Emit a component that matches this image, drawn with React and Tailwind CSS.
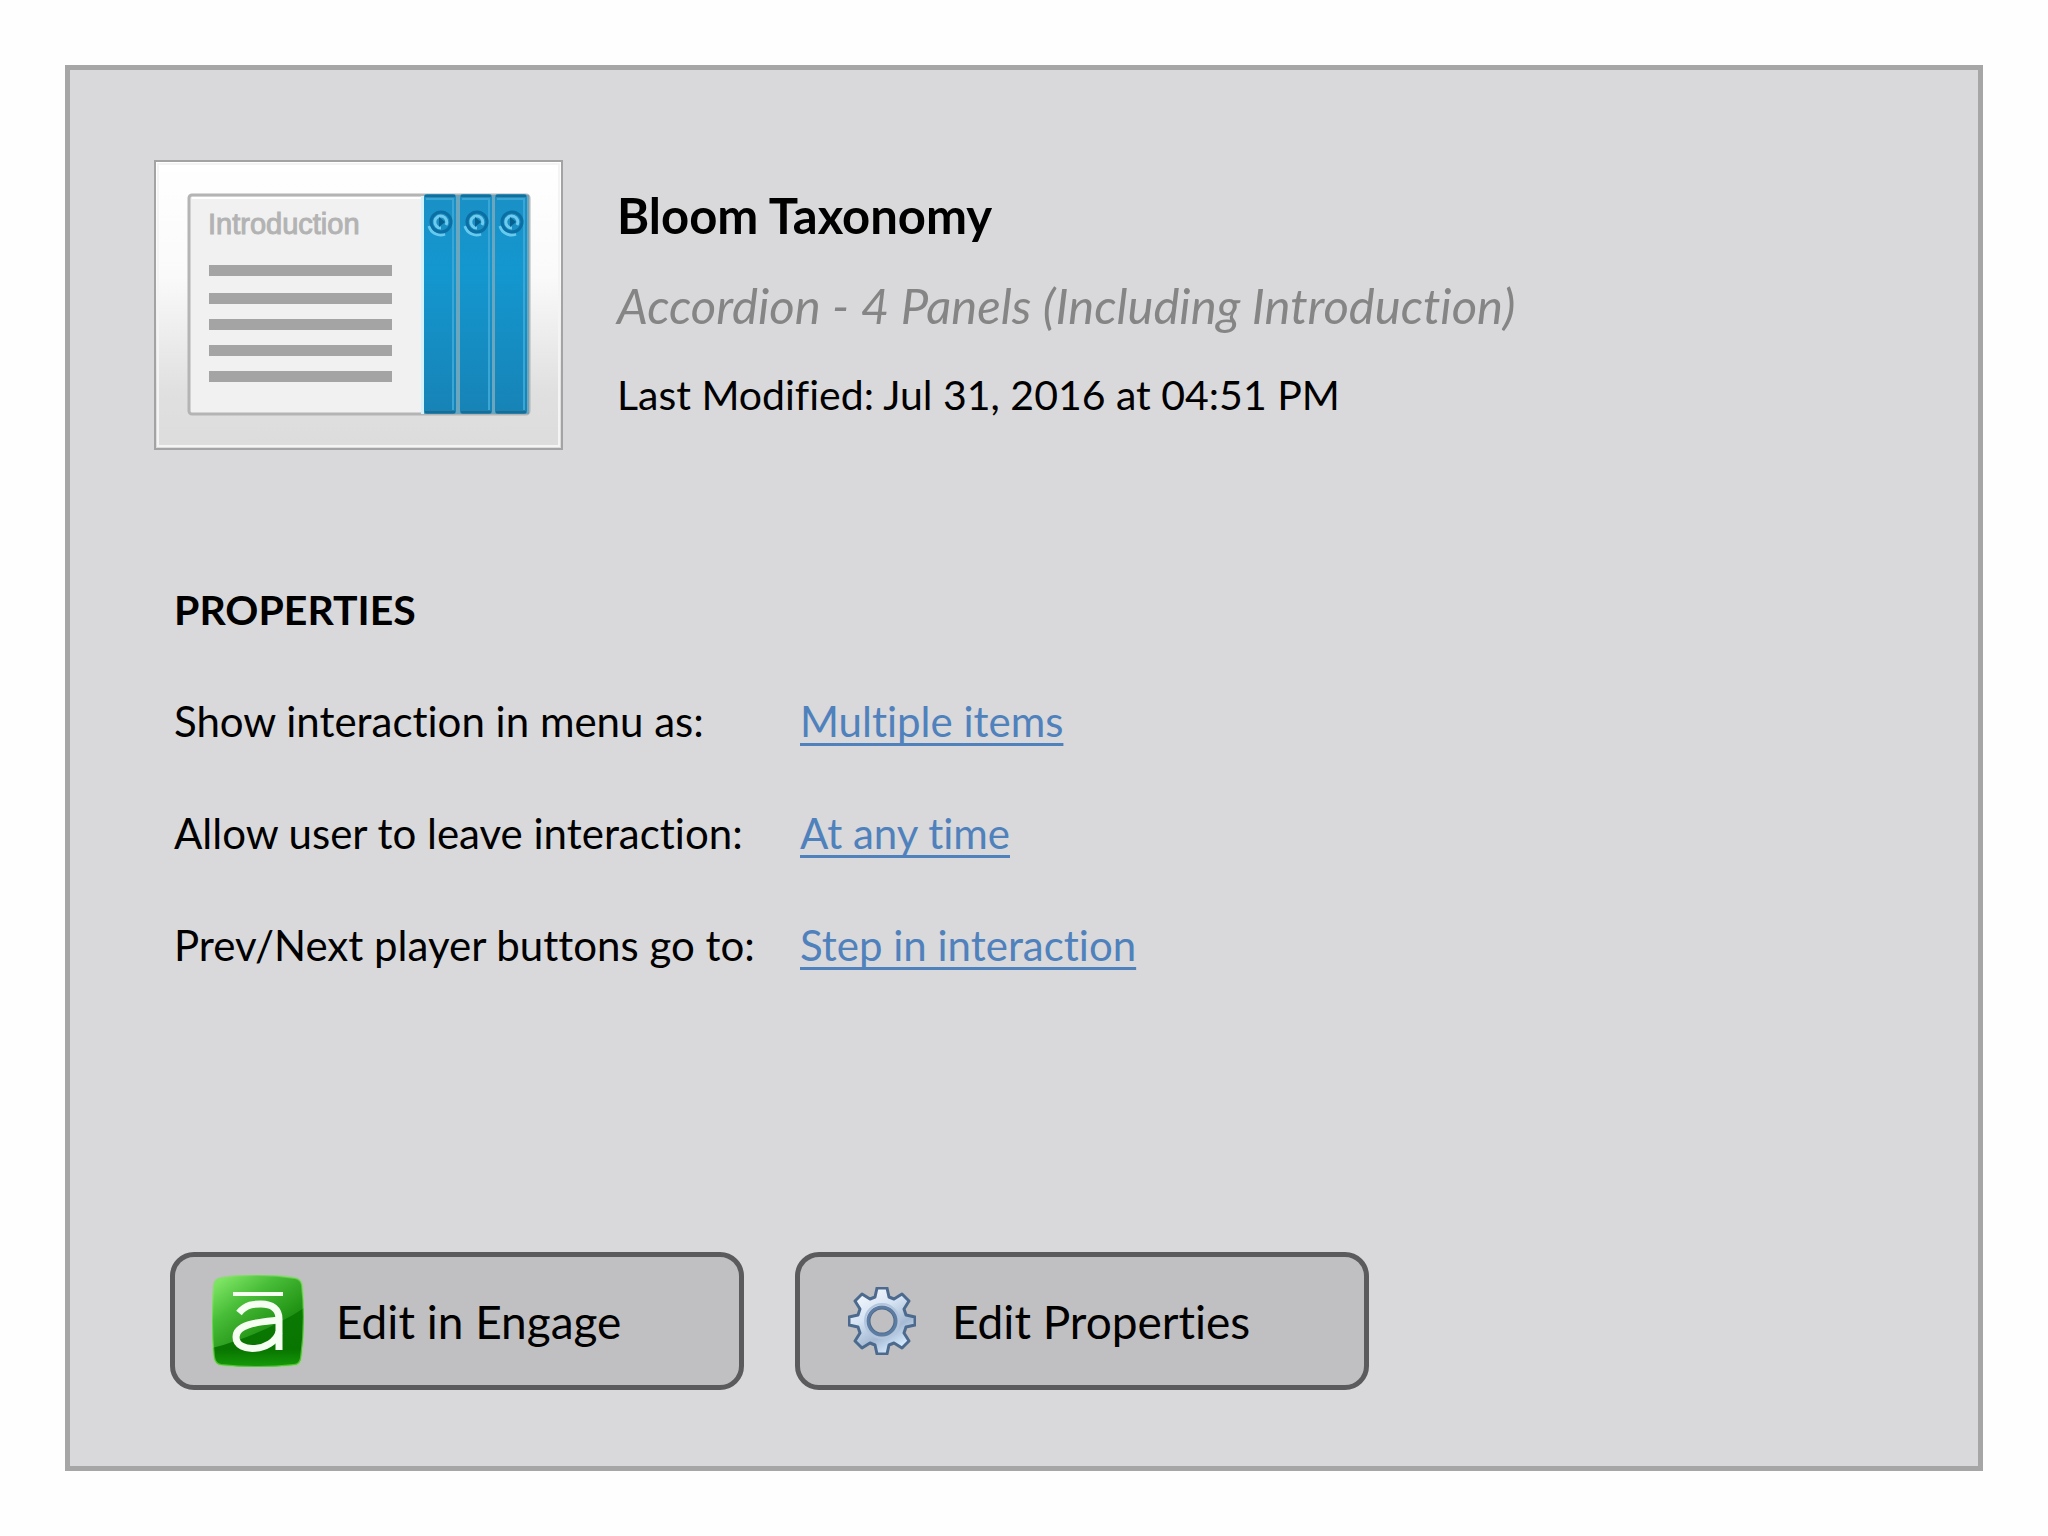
import React from 'react';

const properties = [
  { id: 'menu', label: 'Show interaction in menu as:', value: 'Multiple items' },
  { id: 'leave', label: 'Allow user to leave interaction:', value: 'At any time' },
  { id: 'player', label: 'Prev/Next player buttons go to:', value: 'Step in interaction' },
];

const AccordionThumbnail = () => (
  <svg viewBox="0 0 409 290" className="w-[409px] h-[290px] flex-shrink-0" role="img" aria-label="Accordion preview">
    <defs>
      <linearGradient id="thumb-bg" x1="0" y1="0" x2="0" y2="1">
        <stop offset="0" stopColor="#ffffff" />
        <stop offset="0.4" stopColor="#fafafa" />
        <stop offset="0.8" stopColor="#e0e0e1" />
        <stop offset="1" stopColor="#dcdcdd" />
      </linearGradient>
      <linearGradient id="thumb-tab" x1="0" y1="0" x2="0" y2="1">
        <stop offset="0" stopColor="#1a90c6" />
        <stop offset="0.35" stopColor="#1397cf" />
        <stop offset="1" stopColor="#1783b6" />
      </linearGradient>
    </defs>
    <rect x="1" y="1" width="407" height="288" fill="url(#thumb-bg)" stroke="#a3a3a3" strokeWidth="2" />
    <rect x="4" y="4" width="401" height="282" fill="none" stroke="#f4f4f4" strokeWidth="2" />
    <rect x="35" y="35" width="340" height="219" rx="3" fill="#f1f1f1" stroke="#b4b4b4" strokeWidth="3" />
    <path d="M38 38H268" stroke="#ffffff" strokeWidth="2" />
    <text x="54" y="74" fontFamily="'Liberation Sans', Arial, sans-serif" fontSize="29" fill="#b3b3b3" stroke="#b3b3b3" strokeWidth="1">
      Introduction
    </text>
    {[105, 133, 159, 185, 211].map((y) => (
      <rect key={y} x="55" y={y} width="183" height="11" fill="#a4a4a4" />
    ))}
    <rect x="267" y="36" width="3" height="218" fill="#d3f2fb" />
    <rect x="270" y="35" width="105" height="219" fill="#6aa6bd" />
    {[270, 306, 341].map((x) => (
      <g key={x}>
        <rect x={x} y="34" width="32" height="220" rx="3" fill="url(#thumb-tab)" />
        <path d={`M${x + 1} 36h30M${x + 1} 252h30`} stroke="#23698c" strokeWidth="2" />
        <path d={`M${x + 2} 39h27v211`} fill="none" stroke="#3aa6d6" strokeWidth="2" />
        <path d={`M${x + 5} 66a12 12 0 0 0 16 8`} fill="none" stroke="#66c9ee" strokeWidth="3" />
        <circle cx={x + 17} cy="62" r="10" fill="#198fc4" stroke="#0b6fa3" strokeWidth="3" />
        <path d={`M${x + 17} 68a6 6 0 1 1 5 -3`} fill="none" stroke="#6fcbee" strokeWidth="3" />
        <path d={`M${x + 15} 57l6 5l-6 5z`} fill="#08608f" />
      </g>
    ))}
  </svg>
);

const EngageIcon = () => (
  <svg viewBox="0 0 92 92" className="w-[92px] h-[92px] flex-shrink-0" aria-hidden="true">
    <defs>
      <linearGradient id="engage-bg" x1="0" y1="0" x2="0.7" y2="1">
        <stop offset="0" stopColor="#8cf070" />
        <stop offset="0.35" stopColor="#48bd38" />
        <stop offset="0.75" stopColor="#1a8c0e" />
        <stop offset="1" stopColor="#149006" />
      </linearGradient>
      <linearGradient id="engage-shade" x1="0" y1="0" x2="0" y2="1">
        <stop offset="0" stopColor="#0a7a03" />
        <stop offset="0.7" stopColor="#087500" />
        <stop offset="1" stopColor="#169a08" />
      </linearGradient>
      <clipPath id="engage-clip">
        <path d="M9 3Q46-3 83 3Q89 4 90 10Q94 46 89 83Q88 90 82 90Q46 94 9 90Q3 89 2 82Q-2 46 2 10Q3 4 9 3Z" />
      </clipPath>
    </defs>
    <g clipPath="url(#engage-clip)">
      <rect width="92" height="92" fill="url(#engage-bg)" />
      <path d="M0 73C34 64 66 50 92 33V92H0Z" fill="url(#engage-shade)" />
    </g>
    <path d="M9 3Q46-3 83 3Q89 4 90 10Q94 46 89 83Q88 90 82 90Q46 94 9 90Q3 89 2 82Q-2 46 2 10Q3 4 9 3Z" fill="none" stroke="#7de25c" strokeWidth="2" opacity="0.6" />
    <g fill="none" stroke="#f5fff2">
      <path d="M21 19H71" strokeWidth="4" />
      <path d="M27 38C34 29 42 29 49 29C60 29 67 34 67 44V75" strokeWidth="7" />
      <path d="M67 45C50 47 24 48 24 62C24 79 61 77 67 57" strokeWidth="7" />
    </g>
  </svg>
);

const GearIcon = () => (
  <svg viewBox="0 0 68 68" className="w-[68px] h-[68px] flex-shrink-0" aria-hidden="true">
    <defs>
      <linearGradient id="gear-fill" x1="0" y1="0" x2="0.6" y2="1">
        <stop offset="0" stopColor="#ffffff" />
        <stop offset="0.45" stopColor="#d5e3f3" />
        <stop offset="0.75" stopColor="#a5bad3" />
        <stop offset="1" stopColor="#d8ecff" />
      </linearGradient>
    </defs>
    <path
      fillRule="evenodd"
      d="M29 1H39L41 10L46 12L54 7L61 14L56 22L58 28L67 30V38L58 40L56 46L61 54L54 61L46 56L41 58L39 67H29L27 58L22 56L14 61L7 54L12 46L10 40L1 38V30L10 28L12 22L7 14L14 7L22 12L27 10ZM34 21A13 13 0 1 0 34 47A13 13 0 1 0 34 21Z"
      fill="url(#gear-fill)"
      stroke="#4b6a8e"
      strokeWidth="3"
      strokeLinejoin="round"
    />
    <circle cx="34" cy="34" r="17" fill="none" stroke="#b3c6dd" strokeWidth="2" />
    <circle cx="34" cy="34" r="14" fill="none" stroke="#5d7ca2" strokeWidth="3" />
  </svg>
);

const App = () => {
  return (
    <div className="flex min-h-screen bg-[#fefefe] p-[65px] font-['Lato',sans-serif] text-black [font-variant-ligatures:none]">
      <main className="flex flex-1 flex-col border-[5px] border-[#a6a6a6] bg-[#d9d8da] px-[100px] pt-[90px] pb-[76px]">
        <header className="-ml-4 flex gap-[54px]">
          <AccordionThumbnail />
          <div className="flex flex-col gap-10 pt-[30px]">
            <h1 className="text-[49px] leading-[50px] font-bold">Bloom Taxonomy</h1>
            <p className="text-[49px] leading-[50px] italic text-[#858586]">
              Accordion - 4 Panels (Including Introduction)
            </p>
            <p className="text-[41px] leading-[50px]">Last Modified: Jul 31, 2016 at 04:51 PM</p>
          </div>
        </header>

        <section className="mt-[135px]">
          <h2 className="pl-1 text-[41px] leading-[50px] font-bold">PROPERTIES</h2>
          <dl className="mt-[61px] flex flex-col gap-[62px] pl-1">
            {properties.map((property) => (
              <div key={property.id} className="flex text-[42px] leading-[50px]">
                <dt className="w-[626px]">{property.label}</dt>
                <dd>
                  <a
                    href={`#${property.id}`}
                    className="text-[#4f81bd] underline decoration-[3px] underline-offset-[6px] [text-decoration-skip-ink:none]"
                  >
                    {property.value}
                  </a>
                </dd>
              </div>
            ))}
          </dl>
        </section>

        <div className="mt-auto flex gap-[51px]">
          <button
            type="button"
            className="flex h-[138px] w-[574px] items-center gap-8 rounded-[24px] border-[5px] border-[#5b5a5c] bg-[#c0bfc1] pl-[37px] text-[46px]"
          >
            <EngageIcon />
            Edit in Engage
          </button>
          <button
            type="button"
            className="flex h-[138px] w-[574px] items-center gap-9 rounded-[24px] border-[5px] border-[#5b5a5c] bg-[#c0bfc1] pl-[48px] text-[46px]"
          >
            <GearIcon />
            Edit Properties
          </button>
        </div>
      </main>
    </div>
  );
};

export default App;
